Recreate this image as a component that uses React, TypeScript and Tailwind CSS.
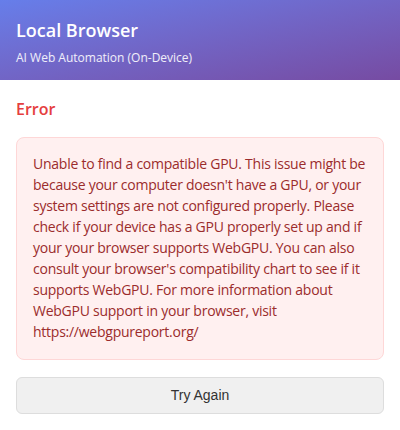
import React from "react";

const lines = [
  "Unable to find a compatible GPU. This issue might be",
  "because your computer doesn't have a GPU, or your",
  "system settings are not configured properly. Please",
  "check if your device has a GPU properly set up and if",
  "your your browser supports WebGPU. You can also",
  "consult your browser's compatibility chart to see if it",
  "supports WebGPU. For more information about",
  "WebGPU support in your browser, visit",
  "https://webgpureport.org/",
];

export default function App() {
  return (
    <div className="w-[400px] h-[430px] bg-white font-['Segoe_UI','Open_Sans',sans-serif]">
      {/* header */}
      <div className="h-[80px] px-4 pt-[18px] bg-gradient-to-br from-[#667eea] to-[#764ba2] text-white">
        <h1 className="text-[18px] leading-[24px] font-semibold">Local Browser</h1>
        <p className="mt-[8px] text-[12px] leading-[16px] text-white/90">
          AI Web Automation (On-Device)
        </p>
      </div>

      <div className="px-4 pt-[18px]">
        <h2 className="text-[16px] leading-[22px] font-semibold text-[#e53e3e]">Error</h2>
        <div className="mt-[17px] rounded-lg border border-[#fed7d7] bg-[#fff0f0] px-4 pt-[15px] pb-[17px] text-[14px] leading-[21px] tracking-[-0.25px] text-[#9b2c2c]">
          {lines.map((l) => (
            <span key={l} className="block whitespace-nowrap">
              {l}
            </span>
          ))}
        </div>
        <button className="mt-[17px] w-full h-[37px] rounded-md border border-[#dddddd] bg-[#f0f0f0] text-[14px] text-[#333] font-['Liberation_Sans',Arial,sans-serif]">
          Try Again
        </button>
      </div>
    </div>
  );
}
